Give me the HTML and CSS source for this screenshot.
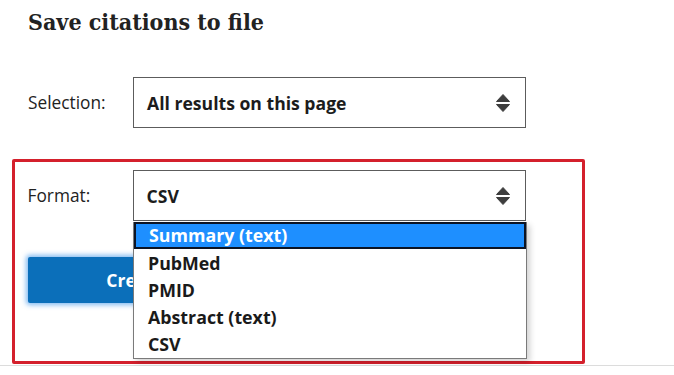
FILE: index.html
```html
<!DOCTYPE html>
<html>
<head>
<meta charset="utf-8">
<link rel="stylesheet" href="styles.css">
</head>
<body>
<div class="page">
  <h2 class="title">Save citations to file</h2>
  <div class="row row-selection">
    <span class="label">Selection:</span>
    <div class="select">
      <span class="select-value">All results on this page</span>
      <svg class="arrows" width="14" height="18" viewBox="0 0 14 18"><path d="M7 0.5 L13.5 7.5 H0.5 Z" fill="#3d3d3d" stroke="#3d3d3d" stroke-linejoin="round"/><path d="M7 17.5 L13.5 10.5 H0.5 Z" fill="#3d3d3d" stroke="#3d3d3d" stroke-linejoin="round"/></svg>
    </div>
  </div>
  <div class="highlight">
    <div class="row">
      <span class="label">Format:</span>
      <div class="select">
        <span class="select-value">CSV</span>
        <svg class="arrows" width="14" height="18" viewBox="0 0 14 18"><path d="M7 0.5 L13.5 7.5 H0.5 Z" fill="#3d3d3d" stroke="#3d3d3d" stroke-linejoin="round"/><path d="M7 17.5 L13.5 10.5 H0.5 Z" fill="#3d3d3d" stroke="#3d3d3d" stroke-linejoin="round"/></svg>
      </div>
    </div>
    <button class="create">Create file</button>
  </div>
  <ul class="options">
    <li class="option selected">Summary (text)</li>
    <li class="option">PubMed</li>
    <li class="option">PMID</li>
    <li class="option">Abstract (text)</li>
    <li class="option">CSV</li>
  </ul>
</div>
<div class="rule"></div>
</body>
</html>
```
FILE: styles.css
```css
html, body { margin: 0; padding: 0; background: #fff; }
body { font-family: "Open Sans", "Noto Sans", sans-serif; color: #212121; }
.page { position: relative; padding: 0 0 0 28px; height: 365px; box-sizing: border-box; }
.title {
  margin: 0; padding-top: 6px;
  font-family: "DejaVu Serif Condensed", "DejaVu Serif", serif; font-stretch: condensed;
  font-weight: bold; font-size: 23px;
  line-height: 32px; color: #222; letter-spacing: 0;
}
.row { display: flex; align-items: center; }
.row-selection { margin-top: 39px; }
.label { width: 105px; font-size: 17.3px; color: #222; }
.select {
  width: 393px; height: 51px; box-sizing: border-box;
  border: 1px solid #5c5c5c; display: flex; align-items: center;
  justify-content: space-between; padding: 0 15px 0 13px; background: #fff;
}
.select-value { font-weight: bold; font-size: 17.6px; color: #1c1c1c; }
.arrows { display: block; }
.highlight {
  margin: 31px 0 0 -16px; width: 573px; height: 205px; box-sizing: border-box;
  border: 3.5px solid #d4202c; border-radius: 2px; padding: 8px 0 0 12.5px;
}
.create {
  display: block; margin-top: 36px; width: 248px; height: 46px;
  background: #0b6fba; color: #fff; border: 0; border-radius: 2px;
  font-family: "Open Sans", sans-serif; font-weight: bold; font-size: 17.5px;
  box-shadow: 0 0 5px 2px rgba(30, 130, 230, 0.55);
}
.options {
  position: absolute; left: 133px; top: 222px; margin: 0; padding: 0;
  list-style: none; width: 394px; height: 137px; box-sizing: border-box;
  border: 1px solid #7a7a7a; border-top: 0; background: #fff;
  box-shadow: 3px 3px 6px rgba(0,0,0,0.18);
}
.option {
  height: 27px; line-height: 28px; padding-left: 14px;
  font-weight: bold; font-size: 17.8px; color: #1a1a1a;
}
.option.selected {
  height: 27px; line-height: 23px; box-sizing: border-box;
  background: #1e8fff; color: #fff; border: 2px solid #0c1424; padding-left: 13px;
}
.rule { border-top: 1px solid #dcdcdc; }
```
